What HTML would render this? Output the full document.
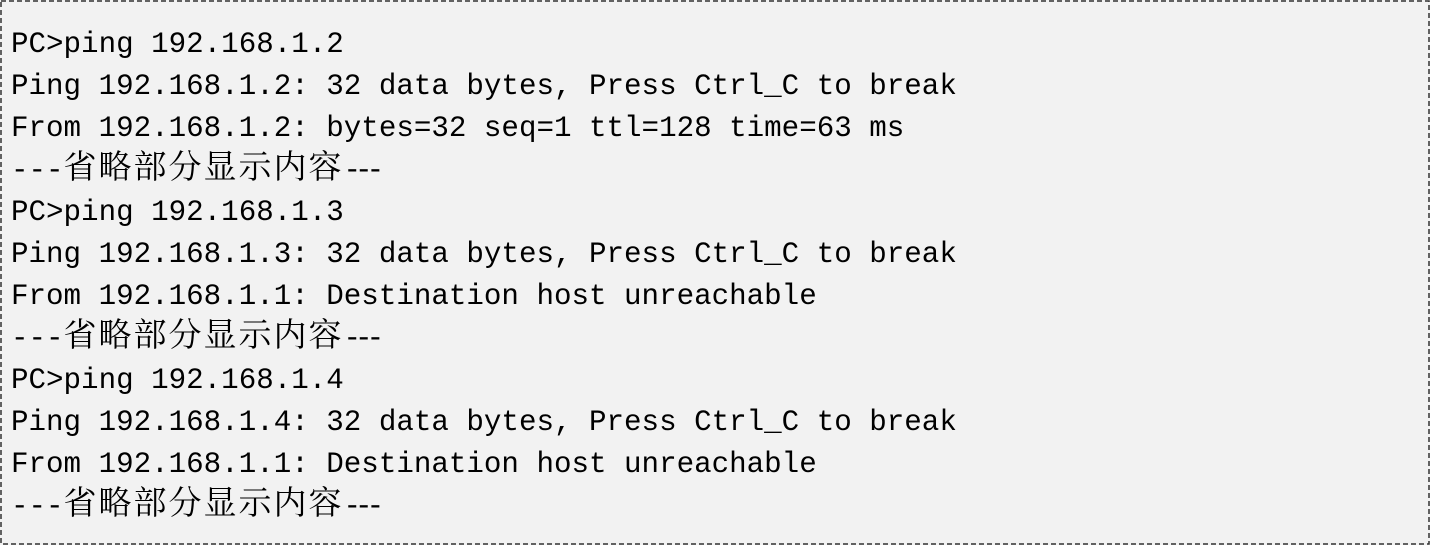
<!DOCTYPE html>
<html><head><meta charset="utf-8"><style>
html,body{margin:0;padding:0;background:#fff;}
.box{position:absolute;left:0;top:0;width:1430px;height:545px;background:#f2f2f2;}
svg{position:absolute;left:0;top:0;}
.t{position:absolute;left:11px;top:24px;font-family:"Liberation Mono",monospace;font-size:29.2px;line-height:42px;color:#000;white-space:pre;}
.c{font-family:"Noto Serif CJK SC","Noto Sans CJK SC",serif;font-size:33px;letter-spacing:2px;line-height:0;}
.d{letter-spacing:-6px;}
</style></head><body>
<div class="box">
<svg width="1430" height="545"><rect x="1" y="1" width="1428" height="543" fill="none" stroke="#333" stroke-width="1.5" stroke-dasharray="5,3"/></svg>
<div class="t">PC&gt;ping 192.168.1.2
Ping 192.168.1.2: 32 data bytes, Press Ctrl_C to break
From 192.168.1.2: bytes=32 seq=1 ttl=128 time=63 ms
---<span class="c">省略部分显示内容</span><span class="d">---</span>
PC&gt;ping 192.168.1.3
Ping 192.168.1.3: 32 data bytes, Press Ctrl_C to break
From 192.168.1.1: Destination host unreachable
---<span class="c">省略部分显示内容</span><span class="d">---</span>
PC&gt;ping 192.168.1.4
Ping 192.168.1.4: 32 data bytes, Press Ctrl_C to break
From 192.168.1.1: Destination host unreachable
---<span class="c">省略部分显示内容</span><span class="d">---</span></div></div>
</body></html>
